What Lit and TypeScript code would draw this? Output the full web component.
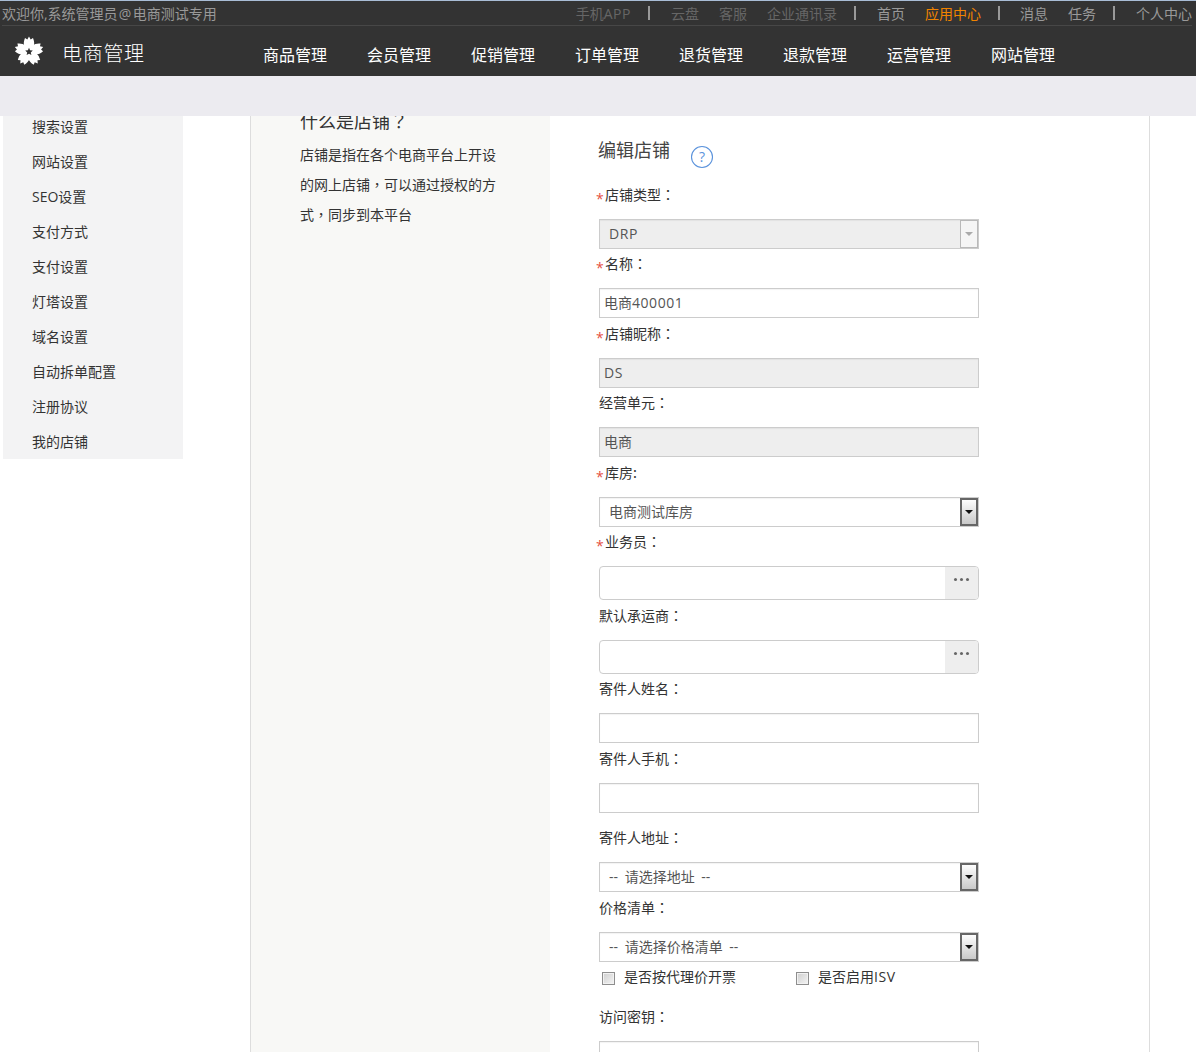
import { LitElement, html, svg, css, nothing } from "lit";
import { customElement } from "lit/decorators.js";

type Field = {
  label: string;
  colon?: string;
  req?: boolean;
  kind: "select" | "selectOff" | "input" | "inputOff" | "lookup";
  value?: string;
  latin?: string;
  gap?: number;
};

const FIELDS: Field[] = [
  { label: "店铺类型", req: true, kind: "selectOff", latin: "DRP" },
  { label: "名称", req: true, kind: "input", value: "电商", latin: "400001" },
  { label: "店铺昵称", req: true, kind: "inputOff", latin: "DS", gap: 1 },
  { label: "经营单元", kind: "inputOff", value: "电商" },
  { label: "库房", colon: ":", req: true, kind: "select", value: "电商测试库房", gap: 1 },
  { label: "业务员", req: true, kind: "lookup" },
  { label: "默认承运商", kind: "lookup", gap: 1 },
  { label: "寄件人姓名", kind: "input" },
  { label: "寄件人手机", kind: "input", gap: 1 },
  { label: "寄件人地址", kind: "select", value: "-- 请选择地址 --", gap: 10 },
  { label: "价格清单", kind: "select", value: "-- 请选择价格清单 --", gap: 1 },
];

const SIDE = ["搜索设置", "网站设置", "SEO设置", "支付方式", "支付设置", "灯塔设置", "域名设置", "自动拆单配置", "注册协议", "我的店铺"];
const NAV = ["商品管理", "会员管理", "促销管理", "订单管理", "退货管理", "退款管理", "运营管理", "网站管理"];

@customElement("app-root")
export class AppRoot extends LitElement {
  static styles = css`
    :host { display: block; width: 1196px; height: 1052px; overflow: hidden; background: #fff;
      font-family: "Open Sans", "Noto Sans CJK SC", sans-serif; font-size: 14px; color: #333; }
    * { box-sizing: border-box; }
    .cp { font-family: "Noto Sans CJK TC", sans-serif; }
    .lat { letter-spacing: .55px; }
    .at { margin: 0 1px 0 1px; letter-spacing: .5px; }
    .hdr { background: #333; height: 76px; border-top: 1px solid #a9bdd6; }
    .top { margin: 0 4px 0 2px; height: 25px; border-bottom: 1px solid #474747; display: flex;
      align-items: center; justify-content: space-between; line-height: 25px; color: #999; white-space: nowrap; }
    .top-r { display: flex; align-items: center; gap: 20px; }
    .dim { color: #666; }
    .hot { color: #f08300; }
    .sep { width: 2px; height: 14px; background: #999; margin: 0 -1px 0 -3px; }
    .sep + span { margin-left: 2px; }
    .sep + span.tight { margin-left: 1px; }
    .main { display: flex; align-items: center; height: 50px; }
    .logo { width: 30px; height: 30px; margin: 0 0 0 14px; flex: none; }
    .brand { margin: 6px 0 0 18px; width: 201px; color: #fff; font-size: 20px; letter-spacing: .7px; font-weight: 300; line-height: 50px; }
    .nav { display: flex; gap: 40px; margin: 5px 0 0 0; }
    .nav span { color: #fff; font-size: 16px; white-space: nowrap; }
    .band { height: 40px; background: #ecebf0; }
    .body { height: 936px; overflow: hidden; display: flex; align-items: flex-start; }
    .side { width: 180px; margin: -7px 0 0 3px; background: #f3f3f4; flex: none; }
    .side div { height: 35px; line-height: 35px; padding-left: 29px; color: #333; }
    .panel { width: 900px; height: 936px; margin-left: 67px; border-left: 1px solid #ddd; border-right: 1px solid #ddd; display: flex; flex: none; }
    .help { width: 299px; background: #f8f8f6; padding-left: 49px; flex: none; }
    .help h3 { margin: -11px 0 4px; font-size: 18px; font-weight: 400; line-height: 30px; color: #333; }
    .help p { margin: 0; width: 200px; line-height: 30px; color: #333; }
    .help p .cp { line-height: 0; }
    .form { width: 380px; margin-left: 49px; padding-top: 19px; flex: none; }
    .head { display: flex; align-items: flex-start; gap: 19px; height: 30px; margin-bottom: 15px; }
    .head h2 { margin: 0 0 0 -1px; font-size: 18px; font-weight: 400; line-height: 30px; color: #444; }
    .q { margin: 10px 0 0 1px; display: block; }
    .lab { height: 39px; line-height: 28px; color: #333; white-space: nowrap; }
    .lab.req { margin-left: -3px; }
    .star { color: #e5503f; display: inline-block; width: 9px; font-size: 14px; line-height: 14px; vertical-align: -4px; }
    .ctl { height: 30px; border: 1px solid #ccc; background: #fff; color: #555; line-height: 28px; padding-left: 4px;
      box-shadow: inset 0 1px 1px rgba(0,0,0,.05); white-space: nowrap; }
    .off { background: #eee; }
    .sel { padding-left: 9px; position: relative; word-spacing: 3px; }
    .arrow { position: absolute; right: 0; top: 0; bottom: 0; width: 18px; border: 2px solid #666;
      background: linear-gradient(#fdfdfd, #c9c9c9); display: flex; align-items: center; justify-content: center; }
    .arrow::after { content: ""; border: 4px solid transparent; border-top: 4px solid #111; border-bottom: 0; }
    .arrow.dis { border-color: #b9b9b9; background: #f5f5f5; border-width: 1px; }
    .arrow.dis::after { border-top-color: #aaa; }
    .look { height: 34px; border: 1px solid #ccc; border-radius: 4px; background: #fff; display: flex; justify-content: flex-end; overflow: hidden; }
    .dots { width: 33px; background: #eee; display: flex; justify-content: center; gap: 3px; padding-top: 11px; }
    .dots i { width: 3px; height: 3px; border-radius: 50%; background: #666; }
    .checks { display: flex; height: 30px; line-height: 28px; color: #333; }
    .ck { display: flex; align-items: center; width: 194px; padding-left: 3px; white-space: nowrap; flex: none; }
    .ck i { width: 13px; height: 13px; border: 1px solid #8e8e8e; margin: 2px 9px 0 0; flex: none;
      background: linear-gradient(135deg, #cfcfcf, #f4f4f4); box-shadow: inset 0 0 0 1px #f2f2f2; }
    .after { margin-top: 10px; }
  `;

  private logo() {
    const petals = [0, 72, 144, 216, 288].map(
      (a) => svg`<path transform="rotate(${a} 15 15.5)" d="M15 15.5 C10 12 8.5 8 11 2 L13.3 3.4 L15 .6 L16.7 3.4 L19 2 C21.5 8 20 12 15 15.5 Z" fill="#fff"/>`
    );
    return html`<svg class="logo" viewBox="0 0 30 30">
      ${petals}
      <circle cx="15" cy="15.5" r="6" fill="#fff"/>
      <polygon points="15,11.8 16.1,14.3 18.8,14.6 16.8,16.4 17.4,19 15,17.7 12.6,19 13.2,16.4 11.2,14.6 13.9,14.3" fill="#333"/>
    </svg>`;
  }

  private control(f: Field) {
    const text = html`${f.value ?? ""}${f.latin ? html`<span class="lat">${f.latin}</span>` : nothing}`;
    switch (f.kind) {
      case "select":
        return html`<div class="ctl sel">${text}<span class="arrow"></span></div>`;
      case "selectOff":
        return html`<div class="ctl sel off">${text}<span class="arrow dis"></span></div>`;
      case "input":
        return html`<div class="ctl">${text}</div>`;
      case "inputOff":
        return html`<div class="ctl off">${text}</div>`;
      default:
        return html`<div class="look"><div class="dots"><i></i><i></i><i></i></div></div>`;
    }
  }

  render() {
    return html`
      <div class="hdr">
        <div class="top">
          <span>欢迎你,系统管理员<span class="at">@</span>电商测试专用</span>
          <div class="top-r">
            <span class="dim">手机<span class="lat">APP</span></span><b class="sep"></b>
            <span class="dim">云盘</span><span class="dim">客服</span><span class="dim">企业通讯录</span><b class="sep"></b>
            <span>首页</span><span class="hot">应用中心</span><b class="sep"></b>
            <span class="tight">消息</span><span>任务</span><b class="sep"></b>
            <span>个人中心</span>
          </div>
        </div>
        <div class="main">
          ${this.logo()}
          <div class="brand">电商管理</div>
          <div class="nav">${NAV.map((n) => html`<span>${n}</span>`)}</div>
        </div>
      </div>
      <div class="band"></div>
      <div class="body">
        <div class="side">${SIDE.map((s) => html`<div>${s}</div>`)}</div>
        <div class="panel">
          <div class="help">
            <h3>什么是店铺<span class="cp">？</span></h3>
            <p>店铺是指在各个电商平台上开设的网上店铺<span class="cp">，</span>可以通过授权的方式<span class="cp">，</span>同步到本平台</p>
          </div>
          <div class="form">
            <div class="head">
              <h2>编辑店铺</h2>
              <svg class="q" width="24" height="24" viewBox="0 0 24 24">
                <circle cx="12" cy="12" r="10.5" fill="#fff" stroke="#5b93dc" stroke-width="1.1"/>
                <text x="12" y="17" text-anchor="middle" font-size="14" fill="#5b93dc">?</text>
              </svg>
            </div>
            ${FIELDS.map(
              (f) => html`
                <div class="lab ${f.req ? "req" : ""}" style=${f.gap ? `margin-top:${f.gap}px` : ""}>
                  ${f.req ? html`<span class="star">*</span>` : nothing}${f.label}<span class="cp">${f.colon ?? "："}</span>
                </div>
                ${this.control(f)}
              `
            )}
            <div class="checks">
              <label class="ck"><i></i>是否按代理价开票</label>
              <label class="ck"><i></i>是否启用<span class="lat">ISV</span></label>
            </div>
            <div class="lab after">访问密钥<span class="cp">：</span></div>
            <div class="ctl"></div>
          </div>
        </div>
      </div>
    `;
  }
}
